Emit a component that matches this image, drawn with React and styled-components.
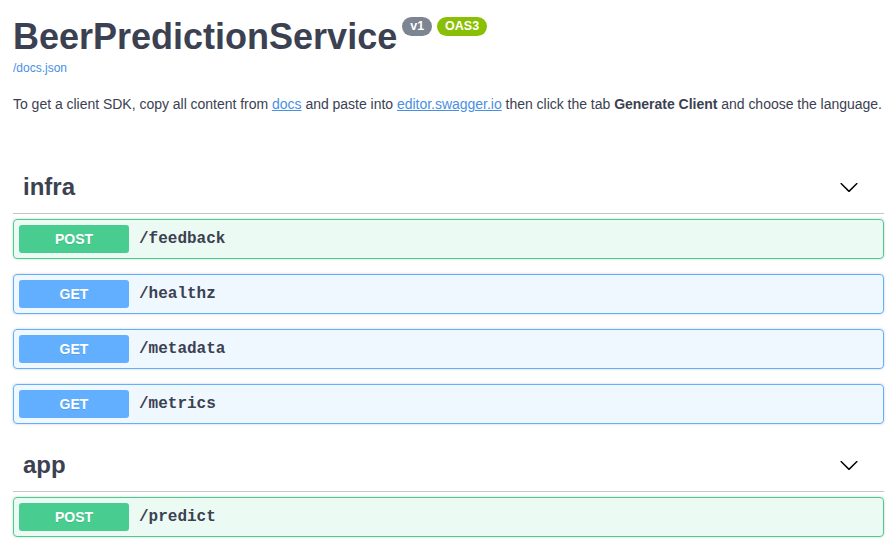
import React from 'react';
import styled, { createGlobalStyle } from 'styled-components';

const TEXT = '#3b4151';
const LINK = '#4990e2';

const METHODS = {
  POST: { color: '#49cc90', bg: 'rgba(73, 204, 144, 0.1)' },
  GET: { color: '#61affe', bg: 'rgba(97, 175, 254, 0.1)' },
};

const GlobalStyle = createGlobalStyle`
  html, body {
    margin: 0;
    padding: 0;
    background: #fff;
  }
  body {
    font-family: 'Liberation Sans', Arial, sans-serif;
    color: ${TEXT};
  }
`;

// PAGE
const Page = styled.div`
  padding: 0 12px 0 13px;
`;

// INFO
const Info = styled.section`
  padding-top: 16px;
  margin-bottom: 52px;
`;
const Title = styled.h2`
  display: flex;
  align-items: flex-start;
  margin: 0;
  font-size: 36px;
  font-weight: 700;
  color: ${TEXT};
`;
const Badge = styled.span`
  display: inline-block;
  margin: 1px 0 0 5px;
  padding: 3px 8px;
  border-radius: 57px;
  background: ${({ bg }) => bg};
  color: #fff;
  font-size: 12.5px;
  font-weight: 700;
  line-height: 13px;
`;
const DocsLink = styled.a`
  display: inline-block;
  margin-top: 2px;
  font-size: 12px;
  color: ${LINK};
  text-decoration: none;
`;
const Description = styled.p`
  margin: 20px 0 0;
  font-size: 14px;
  line-height: 16px;
  letter-spacing: -0.02px;
  white-space: nowrap;
  color: ${TEXT};

  a {
    color: ${LINK};
    text-decoration: underline;
  }
`;

// TAG SECTION
const TagSection = styled.section`
  margin-bottom: 18px;
`;
const TagHeading = styled.h3`
  display: flex;
  align-items: center;
  justify-content: space-between;
  margin: 0 0 5px;
  padding: 8px 20px 12px 10px;
  font-size: 24px;
  line-height: 29px;
  font-weight: 700;
  color: ${TEXT};
  border-bottom: 1px solid rgba(59, 65, 81, 0.3);
`;
const Arrow = styled.svg`
  width: 20px;
  height: 20px;
  margin-right: 5px;
  fill: #000;
`;

// OPERATION
const OpBlock = styled.div`
  display: flex;
  align-items: center;
  margin-bottom: 15px;
  padding: 5px;
  border: 1px solid ${({ method }) => METHODS[method].color};
  border-radius: 4px;
  background: ${({ method }) => METHODS[method].bg};
  box-shadow: 0 0 3px rgba(0, 0, 0, 0.19);
`;
const Method = styled.span`
  min-width: 80px;
  padding: 6px 15px;
  border-radius: 3px;
  background: ${({ method }) => METHODS[method].color};
  color: #fff;
  font-size: 14px;
  line-height: 16px;
  font-weight: 700;
  text-align: center;
  text-shadow: 0 1px 0 rgba(0, 0, 0, 0.1);
`;
const Path = styled.span`
  padding: 0 10px;
  font-family: 'Liberation Mono', 'Courier New', monospace;
  font-size: 16px;
  font-weight: 700;
  color: ${TEXT};
`;

const tags = [
  {
    name: 'infra',
    ops: [
      ['POST', '/feedback'],
      ['GET', '/healthz'],
      ['GET', '/metadata'],
      ['GET', '/metrics'],
    ],
  },
  { name: 'app', ops: [['POST', '/predict']] },
];

function ArrowDown() {
  return (
    <Arrow viewBox="0 0 20 20">
      <path d="M17.418 6.109c.272-.268.709-.268.979 0s.271.701 0 .969l-7.908 7.83c-.27.268-.707.268-.979 0l-7.908-7.83c-.27-.268-.27-.701 0-.969.271-.268.709-.268.979 0L10 13.25l7.418-7.141z" />
    </Arrow>
  );
}

export default function App() {
  return (
    <Page>
      <GlobalStyle />
      <Info>
        <Title>
          BeerPredictionService
          <Badge bg="#7d8492">v1</Badge>
          <Badge bg="#89bf04">OAS3</Badge>
        </Title>
        <DocsLink href="#">/docs.json</DocsLink>
        <Description>
          To get a client SDK, copy all content from <a href="#">docs</a> and
          paste into <a href="#">editor.swagger.io</a> then click the tab{' '}
          <b>Generate Client</b> and choose the language.
        </Description>
      </Info>
      {tags.map((tag) => (
        <TagSection key={tag.name}>
          <TagHeading>
            <span>{tag.name}</span>
            <ArrowDown />
          </TagHeading>
          {tag.ops.map(([method, path]) => (
            <OpBlock key={path} method={method}>
              <Method method={method}>{method}</Method>
              <Path>{path}</Path>
            </OpBlock>
          ))}
        </TagSection>
      ))}
    </Page>
  );
}
